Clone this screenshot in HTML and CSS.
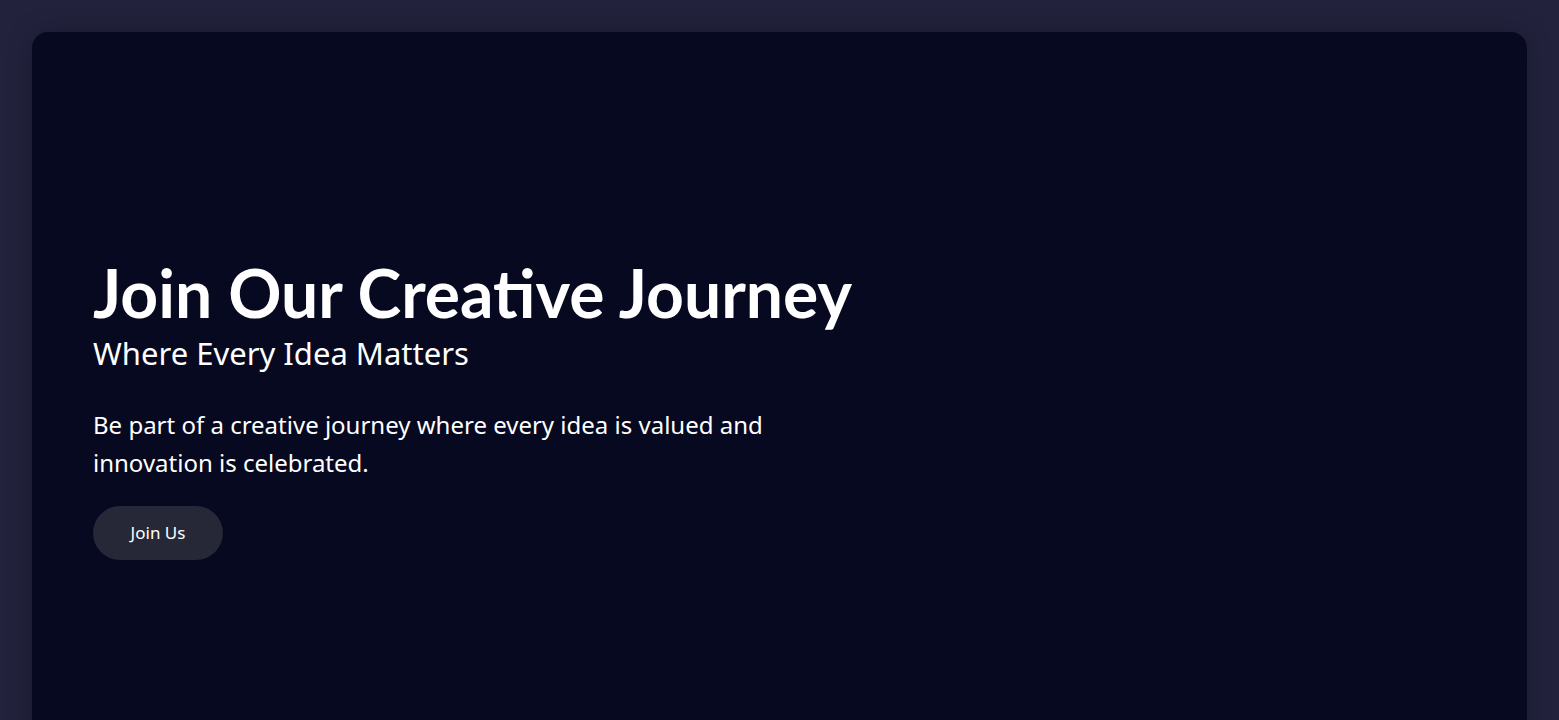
FILE: index.html
```html
<!DOCTYPE html>
<html lang="en">
<head>
<meta charset="utf-8">
<title>Join Our Creative Journey</title>
<link rel="stylesheet" href="styles.css">
</head>
<body>
<main class="page">
  <section class="hero">
    <div class="hero-content">
      <h1 class="hero-title">Join Our Creative Journey</h1>
      <h2 class="hero-subtitle">Where Every Idea Matters</h2>
      <p class="hero-text">Be part of a creative journey where every idea is valued and innovation is celebrated.</p>
      <button class="hero-button" type="button">Join Us</button>
    </div>
  </section>
</main>
</body>
</html>
```
FILE: styles.css
```css
* { box-sizing: border-box; }
html, body { margin: 0; padding: 0; }
body {
  background: #22223d;
  font-family: "Noto Sans", "Open Sans", sans-serif;
  color: #ffffff;
  height: 720px;
  overflow: hidden;
}
.page {
  padding: 32px 32px 0 32px;
}
.hero {
  background: #070920;
  border-radius: 16px;
  height: 720px;
  box-shadow: 0 0 24px rgba(0, 0, 0, 0.25);
  padding: 225px 61px 0 61px;
}
.hero-content {
  display: flex;
  flex-direction: column;
  align-items: flex-start;
  max-width: 800px;
}
.hero-title {
  font-family: "Lato", sans-serif;
  font-weight: 700;
  font-size: 66px;
  line-height: 1.1;
  margin: 0;
}
.hero-subtitle {
  font-family: "Noto Sans", sans-serif;
  font-weight: 400;
  font-size: 31px;
  line-height: 1.3;
  margin: 3px 0 0 0;
}
.hero-text {
  font-family: "Noto Sans", sans-serif;
  font-size: 24px;
  line-height: 38px;
  margin: 33px 0 0 0;
  max-width: 700px;
}
.hero-button {
  font-family: "Noto Sans", sans-serif;
  font-size: 17px;
  color: #ffffff;
  background: #262838;
  border: none;
  border-radius: 999px;
  width: 130px;
  height: 54px;
  margin-top: 24px;
  cursor: pointer;
}
```
